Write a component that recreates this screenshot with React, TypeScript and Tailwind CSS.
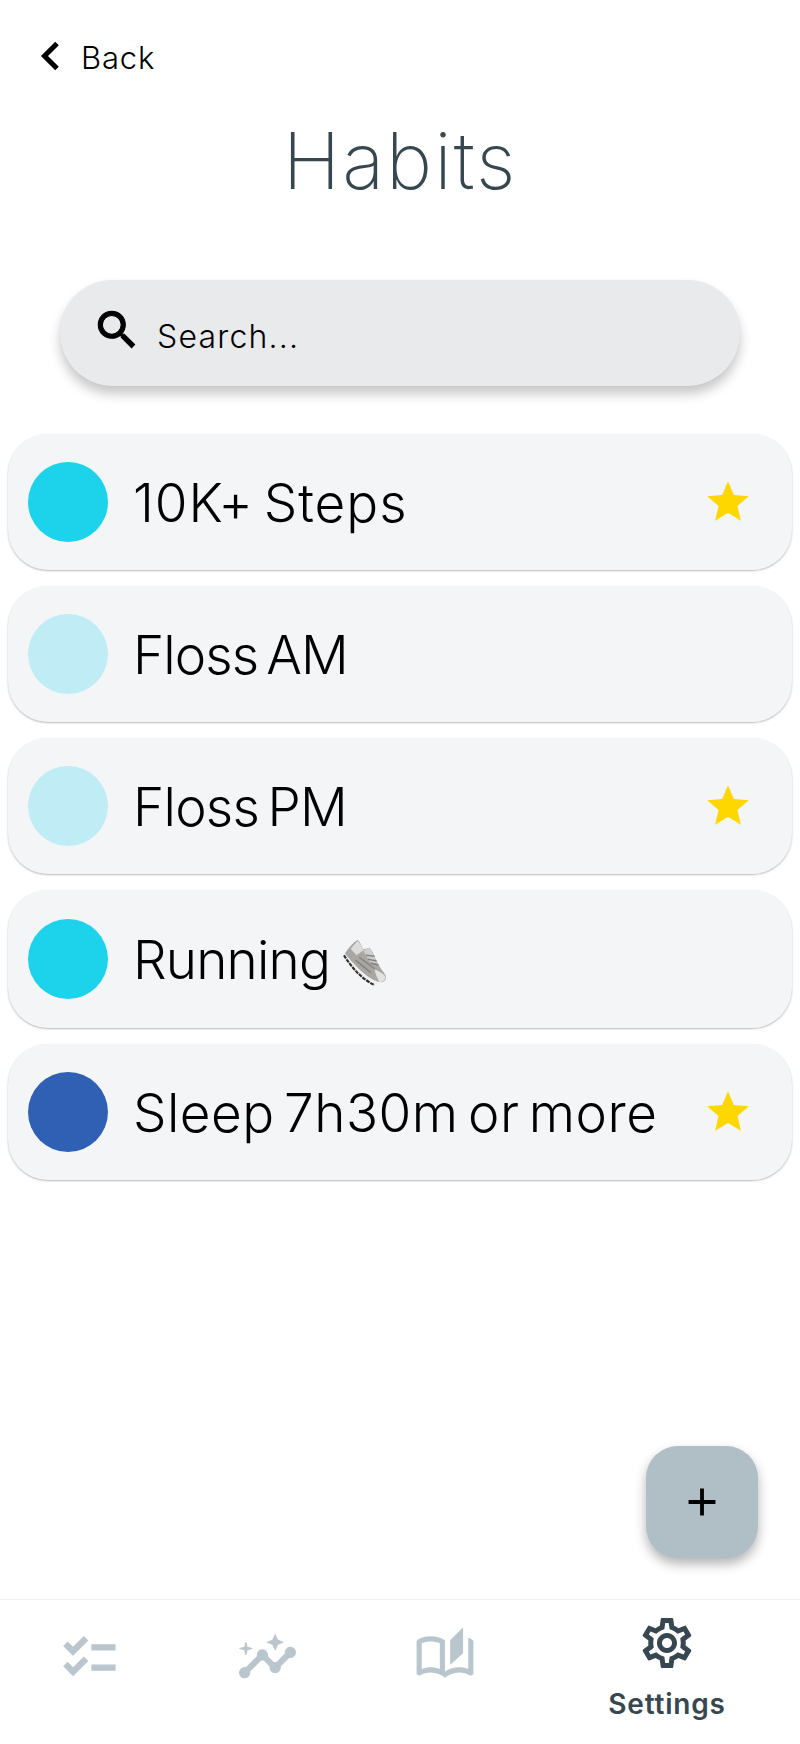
import { MdAdd, MdOutlineAutoStories, MdOutlineSettings, MdStar } from 'react-icons/md';

const habits = [
  { name: '10K+ Steps', color: 'bg-[#1dd3eb]', starred: true, tracking: 'tracking-[1px]' },
  { name: 'Floss AM', color: 'bg-[#bfecf5]', starred: false, tracking: 'tracking-[-0.9px]' },
  { name: 'Floss PM', color: 'bg-[#bfecf5]', starred: true, tracking: 'tracking-[-0.7px]' },
  { name: 'Running', color: 'bg-[#1dd3eb]', starred: false, shoe: true, tracking: 'tracking-[-0.8px]' },
  { name: 'Sleep 7h30m or more', color: 'bg-[#2f60b3]', starred: true, tracking: 'tracking-[0.5px]' },
];

/** Sneaker emoji, drawn because no colour emoji font is installed. */
function Shoe() {
  return (
    <svg viewBox="0 0 48 50" className="w-[46px] h-[48px] ml-[13px] mt-[6px]">
      <path d="M2 15 C6 9 10 4 15 1 C18 3 19 6 21 11 L28 9 L31 14 C34 22 38 29 44 37 C46 41 44 45 40 45 C30 45 14 30 2 15Z" fill="#a8a7a4" />
      <path d="M15 2 C18 4 20 8 21 12 L14 17 L8 10 Z" fill="#dcdcda" />
      <path d="M21 12 L28 9 L31 15 C33 20 34 23 36 26 L28 24 Z" fill="#cfcfcd" />
      <path d="M33 32 C37 33 42 36 44 39 C45 42 42 45 38 45 C36 41 34 37 33 32Z" fill="#e2e2e0" />
      <path d="M13 22 L29 35 M17 19 L33 31 M24 17 L33 18 M26 21 L35 23 M29 25 L37 27" stroke="#858482" strokeWidth="1.6" fill="none" />
      <path d="M3 18 C12 29 24 41 38 46 L34 48 C22 43 10 31 3 18Z" fill="#f0f0ee" />
      <path d="M1 17 C9 30 21 43 33 48" stroke="#2f2e2d" strokeWidth="2.2" fill="none" strokeDasharray="4 1" />
    </svg>
  );
}

function SearchIcon() {
  return (
    <svg viewBox="0 0 24 24" className="w-[50px] h-[50px] -mt-[6px] fill-black stroke-black stroke-[0.5]">
      <path d="M15.5 14h-.79l-.28-.27C15.41 12.59 16 11.11 16 9.5 16 5.91 13.09 3 9.5 3S3 5.91 3 9.5 5.91 16 9.5 16c1.61 0 3.09-.59 4.23-1.57l.27.28v.79l5 4.99L20.49 19l-4.99-5zm-6 0C7.01 14 5 11.99 5 9.5S7.01 5 9.5 5 14 7.01 14 9.5 11.99 14 9.5 14z" />
    </svg>
  );
}

function ChecklistIcon() {
  return (
    <svg viewBox="0 0 24 24" className="w-[61px] h-[61px] fill-[#bac6cd] stroke-[#bac6cd] stroke-[0.5]">
      <path d="M22 7h-9v2h9V7zm0 8h-9v2h9v-2zM5.54 11 2 7.46l1.41-1.41 2.12 2.12 4.24-4.24 1.41 1.41L5.54 11zm0 8L2 15.46l1.41-1.41 2.12 2.12 4.24-4.24 1.41 1.41L5.54 19z" />
    </svg>
  );
}

function InsightsIcon() {
  return (
    <svg viewBox="0 0 24 24" className="w-[61px] h-[61px] fill-[#bac6cd] stroke-[#bac6cd] stroke-[0.4]">
      <path d="M21 8c-1.45 0-2.26 1.44-1.93 2.51l-3.55 3.56c-.3-.09-.74-.09-1.04 0l-2.55-2.55C12.27 10.45 11.46 9 10 9c-1.45 0-2.27 1.44-1.93 2.52l-4.56 4.55C2.44 15.74 1 16.55 1 18c0 1.1.9 2 2 2 1.45 0 2.26-1.44 1.93-2.51l4.55-4.56c.3.09.74.09 1.04 0l2.55 2.55C12.73 16.55 13.54 18 15 18c1.45 0 2.27-1.44 1.93-2.52l3.56-3.55c1.07.33 2.51-.48 2.51-1.93 0-1.1-.9-2-2-2z" />
      <path d="m15 9 .94-2.07L18 6l-2.06-.93L15 3l-.92 2.07L12 6l2.08.93zM3.5 11 4 9l2-.5L4 8l-.5-2L3 8l-2 .5L3 9z" />
    </svg>
  );
}

function HabitRow({ name, color, starred, shoe, tracking }: { name: string; color: string; starred: boolean; shoe?: boolean; tracking: string }) {
  return (
    <div className={`flex items-center pl-[20px] pr-[39px] rounded-[40px] bg-[#f4f5f7] shadow-[0_1px_2px_rgba(0,0,0,0.28)] ${shoe ? 'h-[138px]' : 'h-[136px]'}`}>
      <div className={`w-[80px] h-[80px] rounded-full shrink-0 ${color}`} />
      <div className={`flex-1 flex items-center ml-[25px] pt-[2px] text-[53px] leading-[70px] text-black font-light [word-spacing:-6px] whitespace-pre ${tracking}`}>
        {name}
        {shoe && <Shoe />}
      </div>
      {starred && <MdStar className="w-[50px] h-[50px] text-[#ffd700]" />}
    </div>
  );
}

export default function App() {
  return (
    <div className="w-full h-[1744px] flex flex-col bg-white font-[Inter,sans-serif]">
      <div className="relative flex-1 flex flex-col">
        <div className="flex items-center pl-[40px] pt-[28px] h-[84px] text-black">
          <svg viewBox="0 0 20 30" className="w-[20px] h-[30px]">
            <path d="M17 2.5 L4.5 15 L17 27.5" fill="none" stroke="currentColor" strokeWidth="5" />
          </svg>
          <span className="ml-[21px] mt-[4px] text-[31px] font-light tracking-[0.8px]">Back</span>
        </div>
        <h1 className="mt-[29px] text-center text-[78px] leading-[96px] font-extralight tracking-[2px] text-[#37474f]">Habits</h1>
        <div className="mt-[71px] mx-[60px] h-[106px] flex items-center pl-[32px] rounded-[53px] bg-[#e9eaec] shadow-[0_8px_12px_rgba(0,0,0,0.22),0_0_2px_rgba(0,0,0,0.06)]">
          <SearchIcon />
          <span className="ml-[15px] mt-[8px] text-[32px] font-light tracking-[1.2px] text-black">Search...</span>
        </div>
        <div className="mt-[48px] mx-[8px] flex flex-col gap-[16px]">
          {habits.map((h) => (
            <HabitRow key={h.name} {...h} />
          ))}
        </div>
        <button
          type="button"
          className="absolute right-[42px] bottom-[41px] w-[112px] h-[112px] flex items-center justify-center rounded-[32px] bg-[#b0bec5] shadow-[0_6px_12px_rgba(0,0,0,0.3)]"
        >
          <MdAdd className="w-[46px] h-[46px] text-black" />
        </button>
      </div>
      <nav className="h-[145px] grid grid-cols-[178px_178px_178px_266px] border-t border-[#f1f1f1] text-[#bac6cd]">
        <div className="flex justify-center pt-[27px]"><ChecklistIcon /></div>
        <div className="flex justify-center pt-[27px]"><InsightsIcon /></div>
        <div className="flex justify-center pt-[26px]"><MdOutlineAutoStories className="w-[62px] h-[62px]" /></div>
        <div className="flex flex-col items-center pt-[13px] text-[#37474f]">
          <MdOutlineSettings className="w-[60px] h-[60px]" />
          <span className="mt-[13px] text-[28px] leading-[36px] font-semibold tracking-[0.8px]">Settings</span>
        </div>
      </nav>
    </div>
  );
}
